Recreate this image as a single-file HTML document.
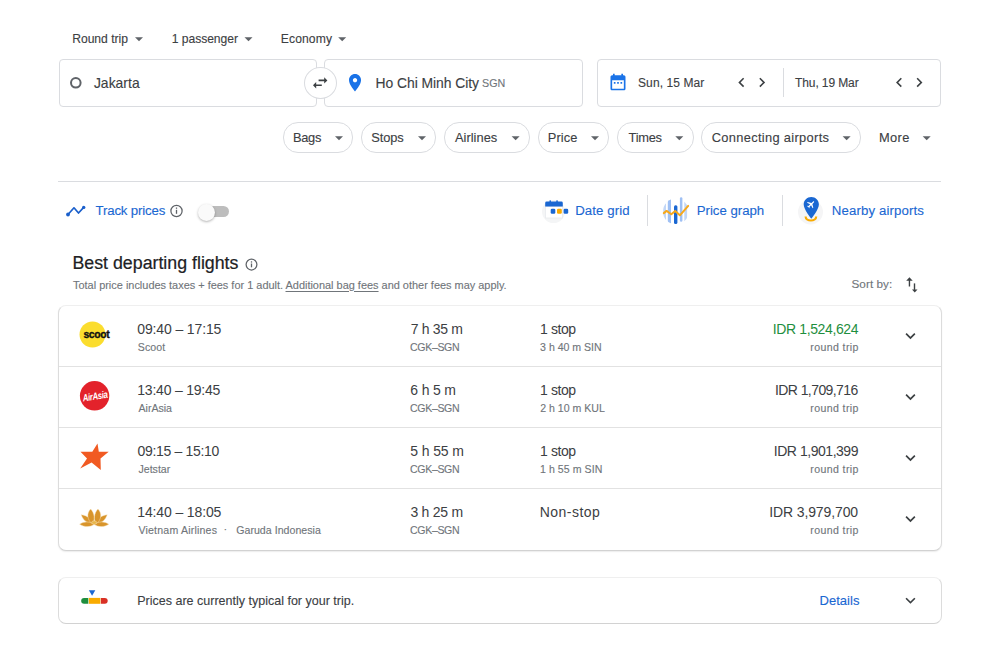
<!DOCTYPE html>
<html><head><meta charset="utf-8">
<style>
*{box-sizing:border-box;margin:0;padding:0}
html,body{width:1000px;height:647px;overflow:hidden;background:#fff}
body{position:relative;font-family:"Liberation Sans",sans-serif;color:#3c4043}
.a{position:absolute;white-space:nowrap;line-height:1;-webkit-text-stroke:0.12px currentColor}
.box{position:absolute;border:1px solid #dadce0;border-radius:4px;background:#fff}
.chip{position:absolute;top:122px;height:31px;border:1px solid #dadce0;border-radius:15px}
.card{position:absolute;left:58px;width:884px;border:1px solid #dcdcdc;border-top-color:#efefef;border-bottom-color:#d2d2d2;border-radius:8px;background:#fff}
.sep{position:absolute;left:59px;width:882px;height:1px;background:#e2e2e2}
#ov{position:absolute;left:0;top:0;width:1000px;height:647px;overflow:visible}
</style></head><body>

<!-- from / to boxes -->
<div class="box" style="left:59px;top:59px;width:258px;height:48px"></div>
<div class="box" style="left:324px;top:59px;width:259px;height:48px"></div>
<div style="position:absolute;left:304px;top:66.5px;width:32.5px;height:32px;border:1px solid #dadce0;border-radius:50%;background:#fff"></div>

<!-- dates -->
<div class="box" style="left:597px;top:59px;width:344px;height:48px"></div>
<div style="position:absolute;left:783px;top:68px;width:1px;height:29px;background:#dadce0"></div>

<!-- chips -->
<div class="chip" style="left:282.5px;width:70px"></div>
<div class="chip" style="left:360.5px;width:75.5px"></div>
<div class="chip" style="left:443.5px;width:86.5px"></div>
<div class="chip" style="left:537.5px;width:71.5px"></div>
<div class="chip" style="left:616.5px;width:77px"></div>
<div class="chip" style="left:701px;width:159.5px"></div>

<!-- hr -->
<div style="position:absolute;left:58px;top:181px;width:883px;height:1px;background:#dadce0"></div>

<!-- toggle -->
<div style="position:absolute;left:201px;top:205.5px;width:28px;height:11.5px;border-radius:6px;background:#bdbdbd"></div>
<div style="position:absolute;left:198px;top:203.5px;width:17px;height:17px;border-radius:50%;background:#fafafa;box-shadow:0 1px 2.5px rgba(0,0,0,.3)"></div>

<!-- tool dividers -->
<div style="position:absolute;left:647px;top:195px;width:1px;height:31px;background:#dadce0"></div>
<div style="position:absolute;left:782px;top:195px;width:1px;height:31px;background:#dadce0"></div>

<!-- flights card -->
<div class="card" style="top:305px;height:246px;box-shadow:0 1px 1.5px rgba(0,0,0,.08)"></div>
<div class="sep" style="top:366px"></div>
<div class="sep" style="top:427px"></div>
<div class="sep" style="top:488px"></div>

<!-- bottom card -->
<div class="card" style="top:577px;height:47px"></div>

<svg id="ov" viewBox="0 0 1000 647">
<defs>
<clipPath id="pc"><circle cx="675.8" cy="211.5" r="12.9"/></clipPath>
</defs>
<!-- dropdown arrows -->
<g fill="#5f6368">
<path d="M135 37.3h8l-4 4z"/><path d="M244.5 37.3h8l-4 4z"/><path d="M338.2 37.3h8l-4 4z"/>
<path d="M335 136.3h8l-4 4z"/><path d="M418 136.3h8l-4 4z"/><path d="M511.6 136.3h8l-4 4z"/><path d="M591 136.3h8l-4 4z"/><path d="M675.3 136.3h8l-4 4z"/><path d="M842.6 136.3h8l-4 4z"/><path d="M922.7 136.3h8l-4 4z"/>
</g>
<!-- origin ring -->
<circle cx="75.8" cy="82.8" r="4.8" fill="none" stroke="#5f6368" stroke-width="2"/>
<!-- swap -->
<g transform="translate(310.6 73.2) scale(0.8)"><path fill="#3c4043" d="M6.99 11L3 15l3.99 4v-3H14v-2H6.99v-3zM21 9l-3.99-4v3H10v2h7.01v3L21 9z"/></g>
<!-- pin -->
<g transform="translate(344.7 72.4) scale(0.86)"><path fill="#1a73e8" d="M12 2C8.13 2 5 5.13 5 9c0 5.25 7 13 7 13s7-7.75 7-13c0-3.87-3.13-7-7-7zm0 9.5c-1.38 0-2.5-1.12-2.5-2.5s1.12-2.5 2.5-2.5 2.5 1.12 2.5 2.5-1.12 2.5-2.5 2.5z"/></g>
<!-- calendar -->
<g transform="translate(608 72) scale(0.8333)"><path fill="#1a73e8" d="M19 4h-1V2h-2v2H8V2H6v2H5c-1.11 0-2 .9-2 2v14c0 1.1.89 2 2 2h14c1.1 0 2-.9 2-2V6c0-1.1-.9-2-2-2zm0 16H5V10h14v10zM7 12h2v2H7zm4 0h2v2h-2zm4 0h2v2h-2z"/></g>
<!-- chevrons -->
<g fill="#3c4043">
<g transform="translate(732 73) scale(0.79)"><path d="M15.41 7.41L14 6l-6 6 6 6 1.41-1.41L10.83 12z"/></g>
<g transform="translate(752.5 73) scale(0.79)"><path d="M10 6L8.59 7.41 13.17 12l-4.58 4.59L10 18l6-6z"/></g>
<g transform="translate(889.7 73) scale(0.79)"><path d="M15.41 7.41L14 6l-6 6 6 6 1.41-1.41L10.83 12z"/></g>
<g transform="translate(909.8 73) scale(0.79)"><path d="M10 6L8.59 7.41 13.17 12l-4.58 4.59L10 18l6-6z"/></g>
</g>
<!-- track icon -->
<polyline points="68,214.5 74,207.8 78.5,213 83.7,207.4" fill="none" stroke="#1a5fcb" stroke-width="1.7" stroke-linejoin="round"/>
<circle cx="68" cy="214.5" r="1.9" fill="#1a5fcb"/><circle cx="83.7" cy="207.4" r="1.7" fill="#1a5fcb"/>
<!-- info icons -->
<g fill="none" stroke="#5f6368" stroke-width="1.25"><circle cx="176.5" cy="211" r="5.6"/><circle cx="251.5" cy="264.6" r="5.4"/></g>
<g fill="#5f6368"><rect x="175.85" y="209.8" width="1.3" height="4" /><rect x="175.85" y="207.5" width="1.3" height="1.3"/>
<rect x="250.85" y="263.5" width="1.3" height="3.8" /><rect x="250.85" y="261.3" width="1.3" height="1.3"/></g>
<!-- date grid icon -->
<circle cx="553.5" cy="211.5" r="11.5" fill="#f4f5f6"/>
<rect x="545.5" y="206.5" width="17" height="11.5" fill="#fff" stroke="#e8eaed" stroke-width="0.8"/>
<path d="M545.2 203a1.4 1.4 0 0 1 1.4-1.4h14.8a1.4 1.4 0 0 1 1.4 1.4v3.6h-17.6z" fill="#1a67d2"/>
<rect x="549.5" y="200.4" width="1.5" height="2" fill="#1a67d2"/><rect x="556.3" y="200.4" width="1.5" height="2" fill="#1a67d2"/>
<rect x="550.7" y="208.7" width="4.6" height="5" rx="1.3" fill="#1a67d2"/>
<rect x="557" y="208.7" width="4.8" height="5" rx="1.3" fill="#f9ab00"/>
<rect x="563.6" y="208.7" width="4.6" height="5" rx="1.3" fill="#1a67d2"/>
<!-- price graph icon -->
<g clip-path="url(#pc)">
<rect x="663.2" y="196" width="2.8" height="32" fill="#c2d7f7"/>
<rect x="667.8" y="196" width="3.2" height="32" fill="#9fc0f4"/>
<rect x="684.3" y="200" width="2.8" height="30" fill="#c2d7f7"/>
</g>
<rect x="679.9" y="197.3" width="2.5" height="24.5" rx="1.25" fill="#9fc0f4"/>
<rect x="674" y="205.3" width="3.4" height="18.7" rx="1.5" fill="#1a67d2"/>
<polyline points="663.8,213.1 666.6,210.9 671.3,214.2 675.2,210.9 679.9,215.3 688.2,205.9" fill="none" stroke="#f7a81b" stroke-width="2" stroke-linejoin="round" stroke-linecap="round"/>
<!-- nearby airports icon -->
<circle cx="810.5" cy="212" r="12.5" fill="#f5f5f6"/>
<path d="M805.6 216.5a5.3 4 0 0 0 10.6 0" fill="none" stroke="#f9ab00" stroke-width="2.2"/>
<path fill="#1a67d2" d="M811.3 197C807 197 803.7 200.3 803.7 204.6 803.7 209.6 811.3 218.8 811.3 218.8s7.6-9.2 7.6-14.2C818.9 200.3 815.6 197 811.3 197z"/>
<g transform="translate(811.2 204.5) rotate(45) scale(0.42) translate(-12 -12)"><path fill="#fff" d="M21 16v-2l-8-5V3.5c0-.83-.67-1.5-1.5-1.5S10 2.67 10 3.5V9l-8 5v2l8-2.5V19l-2 1.5V22l3.5-1 3.5 1v-1.5L13 19v-5.5l8 2.5z"/></g>
<!-- sort icon -->
<g fill="#3c4043">
<path d="M906.2 280.8h6.5l-3.25-3.6z"/><rect x="908.75" y="280" width="1.4" height="6.5"/>
<rect x="913.8" y="283.4" width="1.4" height="6.5"/><path d="M912 289.6h5.5l-2.75 2.9z"/>
</g>
<!-- expand chevrons -->
<g fill="#3c4043">
<g transform="translate(900.5 325.9) scale(0.83)"><path d="M16.59 8.59L12 13.17 7.41 8.59 6 10l6 6 6-6z"/></g>
<g transform="translate(900.5 386.9) scale(0.83)"><path d="M16.59 8.59L12 13.17 7.41 8.59 6 10l6 6 6-6z"/></g>
<g transform="translate(900.5 447.9) scale(0.83)"><path d="M16.59 8.59L12 13.17 7.41 8.59 6 10l6 6 6-6z"/></g>
<g transform="translate(900.5 508.9) scale(0.83)"><path d="M16.59 8.59L12 13.17 7.41 8.59 6 10l6 6 6-6z"/></g>
<g transform="translate(900.5 590.5) scale(0.83)"><path d="M16.59 8.59L12 13.17 7.41 8.59 6 10l6 6 6-6z"/></g>
</g>
<!-- logos -->
<circle cx="92.5" cy="334.5" r="13" fill="#fbdd2e"/>
<text x="83.4" y="337.6" font-family="Liberation Sans" font-weight="bold" font-size="10.4" fill="#111" letter-spacing="-0.35" stroke="#111" stroke-width="0.35">scoot</text>
<circle cx="94.6" cy="395.8" r="14.7" fill="#e3222b"/>
<g transform="translate(95 396) rotate(-9) scale(0.78 1)"><text x="0" y="3.6" text-anchor="middle" font-family="Liberation Sans" font-style="italic" font-weight="bold" font-size="10" fill="#fff" letter-spacing="-0.4">AirAsia</text></g>
<path fill="#f15a22" d="M97.5 443.6L98.8 451.8 108.7 451.8 100.5 458.5 100.8 470 91.6 462.5 80.2 468.6 87 458.5 80.5 451.8 92.3 451.8z"/>
<g fill="#d9952b" stroke="#f6e2bd" stroke-width="0.45" transform="translate(79.6 509)">
<path d="M1.6 5.7C3 10 6.5 14.5 14.5 15.5 13 10.5 8 6.5 1.6 5.7z"/>
<path d="M27.6 5.7C26.2 10 22.7 14.5 14.7 15.5 16.2 10.5 21.2 6.5 27.6 5.7z"/>
<path d="M11.1 0C7.2 4 6.8 10 13 15.5 15.6 11 15 4 11.1 0z"/>
<path d="M18.3 0C22.2 4 22.6 10 16.4 15.5 13.8 11 14.4 4 18.3 0z"/>
<path d="M0 15.2C4.5 12 10.5 12.2 14.6 15.6 10.5 18.3 4.5 18.3 0 15.2z"/>
<path d="M29.2 15.2C24.7 12 18.7 12.2 14.6 15.6 18.7 18.3 24.7 18.3 29.2 15.2z"/>
<ellipse cx="14.6" cy="13.6" rx="2.6" ry="1.8" fill="#e8b64a"/>
</g>
<!-- price level indicator -->
<path fill="#1a67d2" d="M88.85 590.2h6.45l-3.2 5.5z"/>
<path fill="#1e8e3e" d="M84.1 597.9h4.2v5.9h-4.2a2.95 2.95 0 0 1 0-5.9z"/>
<rect x="88.85" y="597.9" width="11.5" height="5.9" fill="#f9ab00"/>
<path fill="#d93025" d="M100.9 597.9h3.85a2.95 2.95 0 0 1 0 5.9h-3.85z"/>
</svg>

<div class="a" style="left:72.20px;top:32.74px;font-size:12.147px;letter-spacing:-0.022px;color:#3c4043;">Round trip</div>
<div class="a" style="left:171.70px;top:32.74px;font-size:12.147px;letter-spacing:-0.040px;color:#3c4043;">1 passenger</div>
<div class="a" style="left:280.80px;top:32.74px;font-size:12.147px;letter-spacing:0.100px;color:#3c4043;">Economy</div>
<div class="a" style="left:93.90px;top:77.05px;font-size:13.909px;letter-spacing:0.033px;color:#3c4043;">Jakarta</div>
<div class="a" style="left:375.60px;top:77.05px;font-size:13.909px;letter-spacing:-0.053px;color:#3c4043;">Ho Chi Minh City</div>
<div class="a" style="left:482.00px;top:78.15px;font-size:10.710px;color:#70757a;">SGN</div>
<div class="a" style="left:638.00px;top:77.26px;font-size:12.001px;letter-spacing:0.100px;color:#3c4043;">Sun, 15 Mar</div>
<div class="a" style="left:795.00px;top:77.26px;font-size:12.001px;letter-spacing:-0.100px;color:#3c4043;">Thu, 19 Mar</div>
<div class="a" style="left:293.00px;top:131.63px;font-size:12.866px;letter-spacing:-0.333px;color:#3c4043;">Bags</div>
<div class="a" style="left:371.30px;top:131.63px;font-size:12.866px;letter-spacing:-0.100px;color:#3c4043;">Stops</div>
<div class="a" style="left:454.90px;top:131.63px;font-size:12.866px;letter-spacing:0.029px;color:#3c4043;">Airlines</div>
<div class="a" style="left:547.85px;top:131.63px;font-size:12.866px;letter-spacing:0.075px;color:#3c4043;">Price</div>
<div class="a" style="left:628.50px;top:131.63px;font-size:12.866px;letter-spacing:-0.250px;color:#3c4043;">Times</div>
<div class="a" style="left:711.75px;top:131.63px;font-size:12.866px;letter-spacing:0.317px;color:#3c4043;">Connecting airports</div>
<div class="a" style="left:878.90px;top:131.63px;font-size:12.866px;letter-spacing:0.400px;color:#3c4043;">More</div>
<div class="a" style="left:95.60px;top:204.39px;font-size:13.264px;letter-spacing:-0.182px;color:#1a67d2;">Track prices</div>
<div class="a" style="left:575.20px;top:204.09px;font-size:13.264px;letter-spacing:0.075px;color:#1a67d2;">Date grid</div>
<div class="a" style="left:696.80px;top:204.09px;font-size:13.264px;letter-spacing:-0.040px;color:#1a67d2;">Price graph</div>
<div class="a" style="left:831.80px;top:204.09px;font-size:13.264px;letter-spacing:0.114px;color:#1a67d2;">Nearby airports</div>
<div class="a" style="left:72.50px;top:255.17px;font-size:17.784px;color:#202124;-webkit-text-stroke:0.2px #202124">Best departing flights</div>
<div class="a" style="left:73.00px;top:279.55px;font-size:10.949px;color:#70757a;">Total price includes taxes + fees for 1 adult. <span style="text-decoration:underline;text-underline-offset:1.5px">Additional bag fees</span> and other fees may apply.</div>
<div class="a" style="left:851.50px;top:278.29px;font-size:11.733px;letter-spacing:0.057px;color:#70757a;">Sort by:</div>
<div class="a" style="left:137.25px;top:322.17px;font-size:14.000px;letter-spacing:-0.125px;color:#3c4043;-webkit-text-stroke:0">09:40 – 17:15</div>
<div class="a" style="left:137.75px;top:341.55px;font-size:10.590px;letter-spacing:0.125px;color:#70757a;">Scoot</div>
<div class="a" style="left:410.65px;top:322.17px;font-size:14.000px;letter-spacing:-0.329px;color:#3c4043;-webkit-text-stroke:0">7 h 35 m</div>
<div class="a" style="left:410.10px;top:341.55px;font-size:10.590px;letter-spacing:-0.367px;color:#70757a;">CGK–SGN</div>
<div class="a" style="left:540.10px;top:322.17px;font-size:14.000px;letter-spacing:-0.440px;color:#3c4043;-webkit-text-stroke:0">1 stop</div>
<div class="a" style="left:540.10px;top:341.55px;font-size:10.590px;letter-spacing:-0.018px;color:#70757a;">3 h 40 m SIN</div>
<div class="a" style="left:772.80px;top:322.17px;font-size:14.000px;letter-spacing:-0.383px;color:#1e8e3e;-webkit-text-stroke:0">IDR 1,524,624</div>
<div class="a" style="left:810.30px;top:341.55px;font-size:10.590px;letter-spacing:0.378px;color:#70757a;">round trip</div>
<div class="a" style="left:137.25px;top:383.17px;font-size:14.000px;letter-spacing:-0.208px;color:#3c4043;-webkit-text-stroke:0">13:40 – 19:45</div>
<div class="a" style="left:138.50px;top:402.55px;font-size:10.590px;color:#70757a;">AirAsia</div>
<div class="a" style="left:410.30px;top:383.17px;font-size:14.000px;letter-spacing:-0.167px;color:#3c4043;-webkit-text-stroke:0">6 h 5 m</div>
<div class="a" style="left:410.10px;top:402.55px;font-size:10.590px;letter-spacing:-0.367px;color:#70757a;">CGK–SGN</div>
<div class="a" style="left:540.10px;top:383.17px;font-size:14.000px;letter-spacing:-0.440px;color:#3c4043;-webkit-text-stroke:0">1 stop</div>
<div class="a" style="left:540.20px;top:402.55px;font-size:10.590px;color:#70757a;">2 h 10 m KUL</div>
<div class="a" style="left:775.00px;top:383.17px;font-size:14.000px;letter-spacing:-0.583px;color:#3c4043;-webkit-text-stroke:0">IDR 1,709,716</div>
<div class="a" style="left:810.30px;top:402.55px;font-size:10.590px;letter-spacing:0.378px;color:#70757a;">round trip</div>
<div class="a" style="left:137.55px;top:444.17px;font-size:14.000px;letter-spacing:-0.325px;color:#3c4043;-webkit-text-stroke:0">09:15 – 15:10</div>
<div class="a" style="left:138.50px;top:463.55px;font-size:10.590px;color:#70757a;">Jetstar</div>
<div class="a" style="left:410.35px;top:444.17px;font-size:14.000px;letter-spacing:-0.129px;color:#3c4043;-webkit-text-stroke:0">5 h 55 m</div>
<div class="a" style="left:410.10px;top:463.55px;font-size:10.590px;letter-spacing:-0.367px;color:#70757a;">CGK–SGN</div>
<div class="a" style="left:540.10px;top:444.17px;font-size:14.000px;letter-spacing:-0.440px;color:#3c4043;-webkit-text-stroke:0">1 stop</div>
<div class="a" style="left:540.00px;top:463.55px;font-size:10.590px;letter-spacing:0.055px;color:#70757a;">1 h 55 m SIN</div>
<div class="a" style="left:773.80px;top:444.17px;font-size:14.000px;letter-spacing:-0.467px;color:#3c4043;-webkit-text-stroke:0">IDR 1,901,399</div>
<div class="a" style="left:810.30px;top:463.55px;font-size:10.590px;letter-spacing:0.378px;color:#70757a;">round trip</div>
<div class="a" style="left:137.25px;top:505.17px;font-size:14.000px;letter-spacing:-0.125px;color:#3c4043;-webkit-text-stroke:0">14:40 – 18:05</div>
<div class="a" style="left:138.45px;top:524.55px;font-size:10.590px;letter-spacing:0.193px;color:#70757a;">Vietnam Airlines</div>
<div class="a" style="left:410.40px;top:505.17px;font-size:14.000px;letter-spacing:-0.257px;color:#3c4043;-webkit-text-stroke:0">3 h 25 m</div>
<div class="a" style="left:410.10px;top:524.55px;font-size:10.590px;letter-spacing:-0.367px;color:#70757a;">CGK–SGN</div>
<div class="a" style="left:539.80px;top:505.17px;font-size:14.000px;letter-spacing:0.457px;color:#3c4043;-webkit-text-stroke:0">Non-stop</div>
<div class="a" style="left:769.15px;top:505.17px;font-size:14.000px;letter-spacing:-0.108px;color:#3c4043;-webkit-text-stroke:0">IDR 3,979,700</div>
<div class="a" style="left:810.30px;top:524.55px;font-size:10.590px;letter-spacing:0.378px;color:#70757a;">round trip</div>
<div class="a" style="left:223.60px;top:524.21px;font-size:11.000px;color:#70757a;">·</div>
<div class="a" style="left:236.20px;top:524.55px;font-size:10.590px;letter-spacing:0.040px;color:#70757a;">Garuda Indonesia</div>
<div class="a" style="left:137.20px;top:594.52px;font-size:12.523px;color:#3c4043;">Prices are currently typical for your trip.</div>
<div class="a" style="left:819.60px;top:594.08px;font-size:13.041px;color:#1a67d2;">Details</div>

</body></html>
